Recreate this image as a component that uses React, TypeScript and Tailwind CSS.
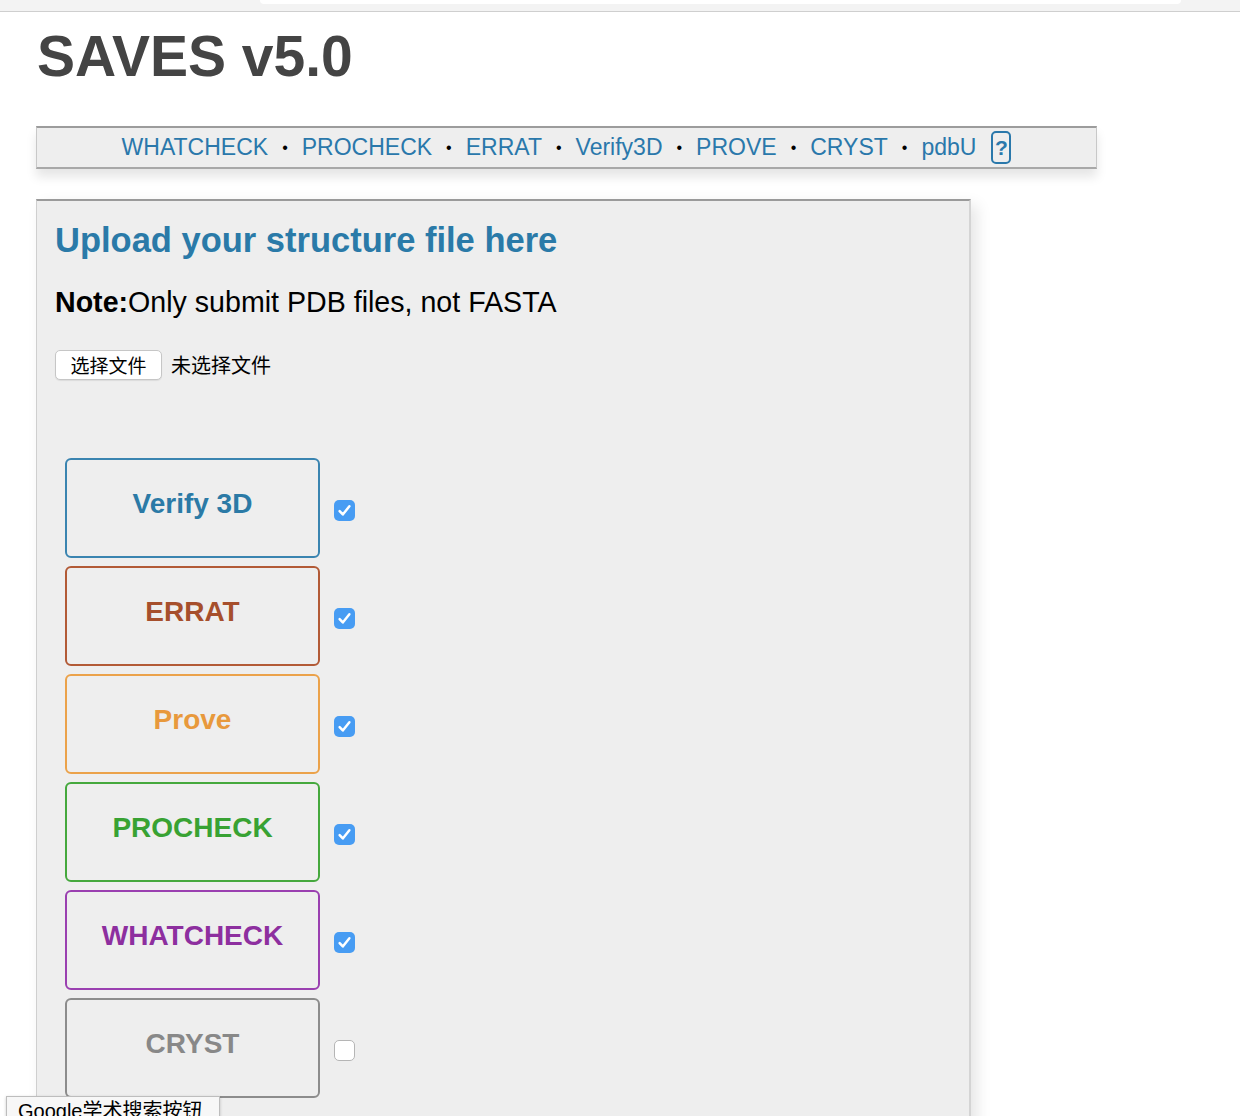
import React from "react";

const tools = [
  { name: "Verify 3D", color: "text-[#2b7aa6]", border: "border-[#3a84b0]", checked: true },
  { name: "ERRAT", color: "text-[#a64f2c]", border: "border-[#b25a36]", checked: true },
  { name: "Prove", color: "text-[#e8993c]", border: "border-[#eba24a]", checked: true },
  { name: "PROCHECK", color: "text-[#38a233]", border: "border-[#45a83d]", checked: true },
  { name: "WHATCHECK", color: "text-[#8d2f9f]", border: "border-[#9a3fb0]", checked: true },
  { name: "CRYST", color: "text-[#888888]", border: "border-[#8c8c8c]", checked: false },
];

const navLinks = ["WHATCHECK", "PROCHECK", "ERRAT", "Verify3D", "PROVE", "CRYST", "pdbU"];

function Check({ checked }: { checked: boolean }) {
  if (checked) {
    return (
      <span className="flex h-[21px] w-[21px] items-center justify-center rounded-[5px] bg-[#479cf3]">
        <svg width="17" height="17" viewBox="0 0 15 15" fill="none">
          <path d="M3.2 8 L6 11 L11.8 3.8" stroke="white" strokeWidth="2.2" strokeLinecap="round" strokeLinejoin="round" />
        </svg>
      </span>
    );
  }
  return <span className="block h-[21px] w-[21px] rounded-[5px] border border-[#b5b5b5] bg-white" />;
}

export default function App() {
  return (
    <div
      className="relative h-[1116px] w-[1240px] overflow-hidden bg-white"
      style={{ fontFamily: '"Liberation Sans", Arial, "Noto Sans CJK SC", sans-serif' }}
    >
      {/* browser strip */}
      <div className="relative h-[12px] border-b border-b-[#cfcfcf] bg-[#f3f3f3]">
        <div className="absolute left-[260px] top-0 h-[4px] w-[921px] rounded-b-[4px] bg-white" />
      </div>

      <h1 className="ml-[37px] mt-[13px] text-[57px] font-bold leading-[62px] text-[#444444]">SAVES v5.0</h1>

      {/* nav */}
      <div className="ml-[36px] mt-[39px] flex h-[43px] w-[1061px] items-center justify-center border-x border-x-[#c8c8c8] border-b-2 border-t-2 border-b-[#a8a8a8] border-t-[#9c9c9c] bg-[#eeeeee] shadow-[0_8px_10px_rgba(0,0,0,0.10)]">
        <div className="flex items-center text-[23px] text-[#2a78ab]">
          {navLinks.map((l, i) => (
            <React.Fragment key={l}>
              {i > 0 && <span className="mx-[14px] text-[16px] text-black">•</span>}
              <span>{l}</span>
            </React.Fragment>
          ))}
          <span className="ml-[15px] flex h-[33px] w-[20px] items-center justify-center rounded-[5px] border-2 border-[#2a78ab] text-[21px] font-bold leading-none">
            ?
          </span>
        </div>
      </div>

      {/* panel */}
      <div className="ml-[36px] mt-[30px] w-[935px] border-l border-r-2 border-t-2 border-l-[#cfcfcf] border-r-[#d4d4d4] border-t-[#9a9a9a] bg-[#eeeeee] pb-[40px] pl-[18px] shadow-[6px_6px_14px_rgba(0,0,0,0.10)]">
        <h2 className="mt-[18px] text-[34.5px] font-bold leading-[42px] text-[#2a7aa8]">Upload your structure file here</h2>
        <p className="mt-[24px] text-[28.6px] leading-[34px] text-black">
          <span className="font-bold">Note:</span>Only submit PDB files, not FASTA
        </p>
        <div
          className="mt-[31px] flex items-center"
          style={{ fontFamily: '"Noto Sans CJK SC", "Liberation Sans", sans-serif' }}
        >
          <span className="flex h-[30px] w-[107px] items-center justify-center rounded-[5px] border border-[#c6c6c6] bg-white text-[19px] text-black shadow-[0_1px_1px_rgba(0,0,0,0.08)]">
            选择文件
          </span>
          <span className="ml-[9px] text-[20px] text-black">未选择文件</span>
        </div>

        <div className="ml-[10px] mt-[78px] flex flex-col gap-[8px]">
          {tools.map((t) => (
            <div key={t.name} className="flex items-center">
              <div
                className={`flex h-[100px] w-[255px] items-center justify-center rounded-[6px] border-2 pb-[9px] ${t.border}`}
              >
                <span className={`text-[28px] font-bold ${t.color}`}>{t.name}</span>
              </div>
              <div className="ml-[14px] mt-[4px]">
                <Check checked={t.checked} />
              </div>
            </div>
          ))}
        </div>
      </div>

      {/* tooltip */}
      <div className="absolute left-[6px] top-[1096px] h-[30px] w-[214px] border border-[#bdbdbd] bg-[#f7f7f7] pl-[11px] pt-[2px] text-[20px] leading-[24px] text-black shadow-[0_1px_3px_rgba(0,0,0,0.2)]">
        <span style={{ fontFamily: '"Liberation Sans", "Noto Sans CJK SC", sans-serif' }}>Google学术搜索按钮</span>
      </div>
    </div>
  );
}
